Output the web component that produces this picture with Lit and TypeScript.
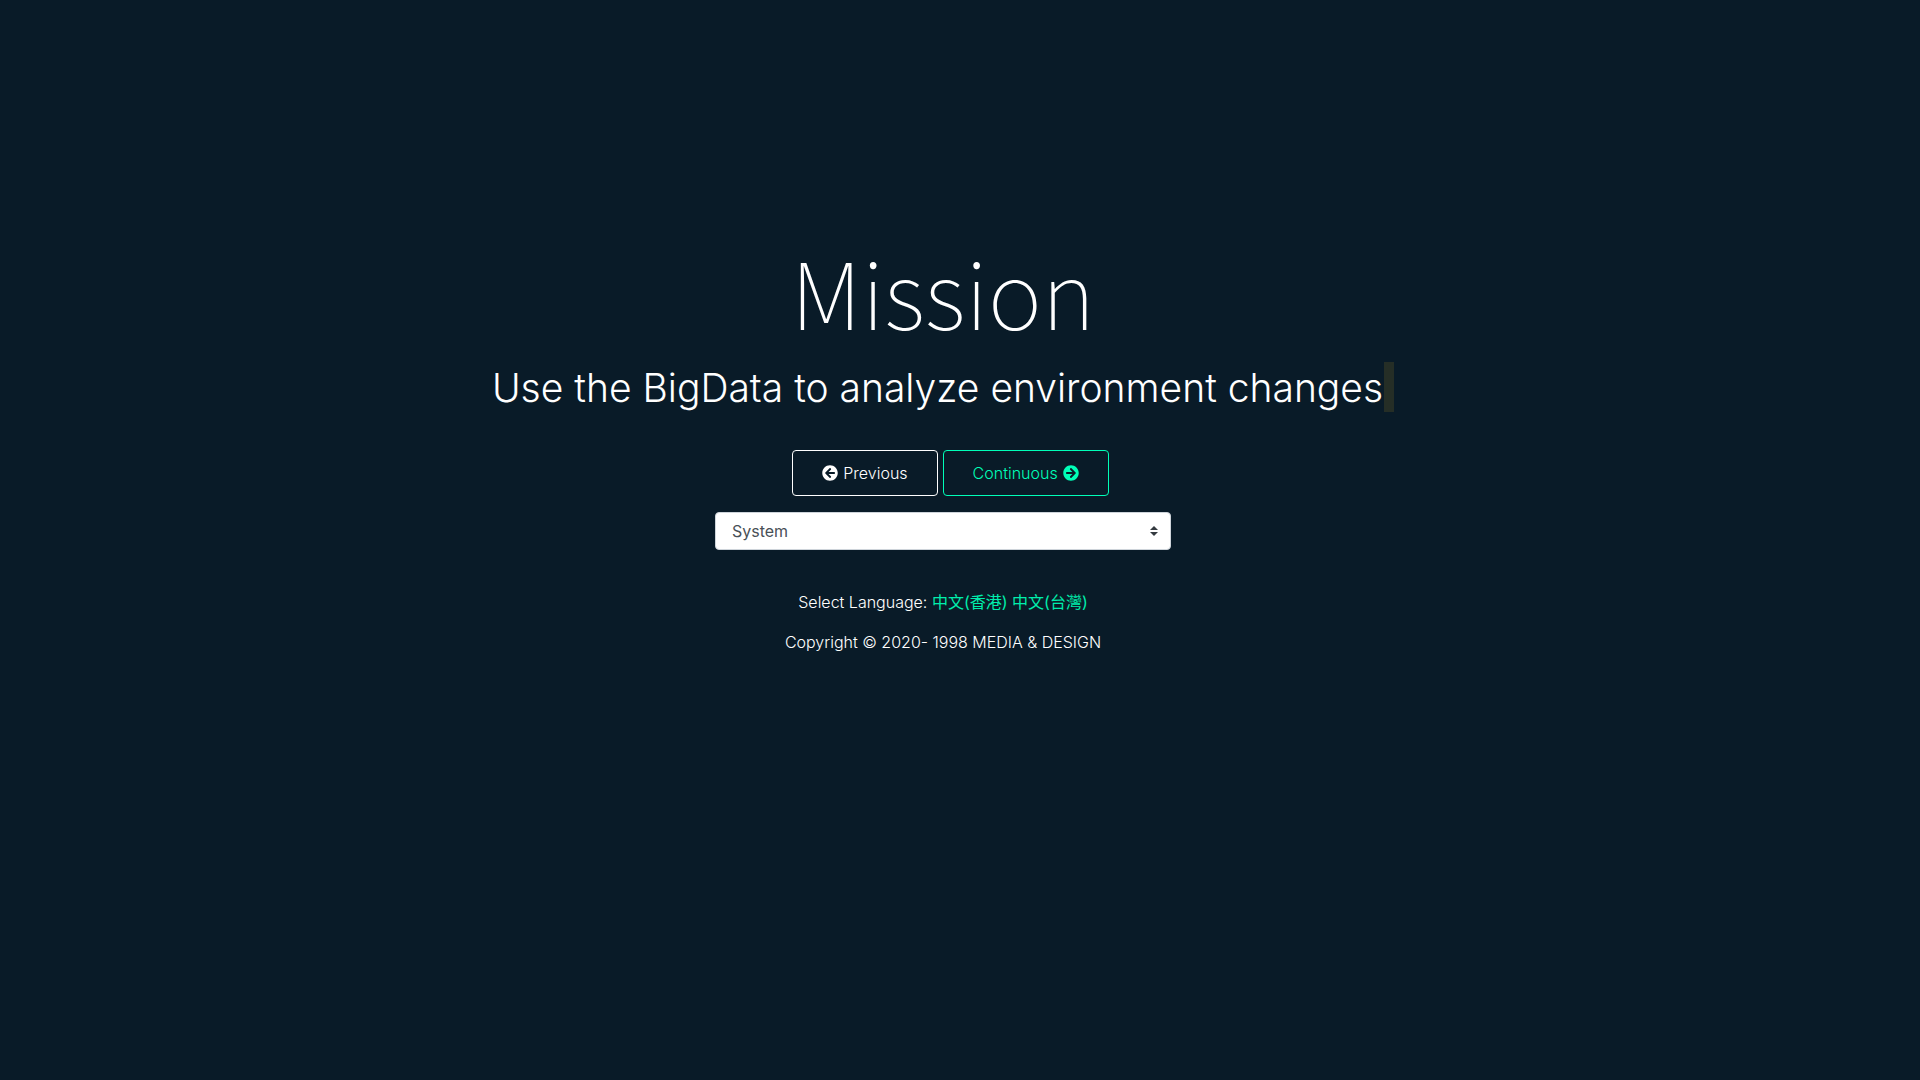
import { LitElement, html, css } from "lit";
import { customElement } from "lit/decorators.js";

@customElement("app-root")
export class AppRoot extends LitElement {
  static styles = css`
    :host {
      display: block;
      min-height: 100vh;
      box-sizing: border-box;
      padding: 236px 34px 0 0;
      background: #091b28;
      color: #fff;
      font: 300 16px/24px Inter, "Noto Sans CJK TC", sans-serif;
      text-align: center;
    }
    * { box-sizing: border-box; }
    .page { display: flex; flex-direction: column; align-items: center; }
    h1, p { margin: 0; }
    .title {
      font: 100 92px/108px "Noto Sans CJK TC", sans-serif;
    }
    .lead {
      display: flex;
      align-items: center;
      margin-top: 18px;
      font-size: 39px;
      font-weight: 300;
      line-height: 52px;
    }
    .caret { width: 10px; height: 50px; margin: 0 0 2px 1px; background: #252e26; }
    .actions { display: flex; gap: 5px; margin-top: 36px; padding-left: 15px; }
    .btn {
      display: flex;
      align-items: center;
      gap: 5px;
      height: 46px;
      padding: 0 29px;
      border: 1px solid currentColor;
      border-radius: 4px;
      background: transparent;
      color: #fff;
      font: inherit;
    }
    .go { color: #00ffb8; }
    .icon { width: 16px; height: 16px; fill: currentColor; }
    .picker { position: relative; width: 456px; max-width: 100%; margin-top: 16px; }
    .select {
      display: block;
      width: 100%;
      height: 38px;
      padding: 0 28px 0 16px;
      border: 1px solid #ced4da;
      border-radius: 4px;
      background: #fff;
      color: #495057;
      font: inherit;
      font-weight: 400;
      appearance: none;
    }
    .arrows { position: absolute; top: 14px; right: 13px; width: 8px; height: 10px; fill: #343a40; pointer-events: none; }
    .languages { margin-top: 40px; }
    .languages a { color: #00eeac; font-weight: 400; text-decoration: none; }
    .copyright { margin-top: 16px; }
  `;

  render() {
    return html`
      <main class="page">
        <h1 class="title">Mission</h1>
        <p class="lead">Use the BigData to analyze environment changes<span class="caret"></span></p>
        <div class="actions">
          <button class="btn" type="button">
            <svg class="icon" viewBox="0 0 512 512" aria-hidden="true"><path d="M256 504C119 504 8 393 8 256S119 8 256 8s248 111 248 248-111 248-248 248zm28.900-143.600L209.400 288H392c13.300 0 24-10.700 24-24v-16c0-13.300-10.700-24-24-24H209.400l75.500-72.400c9.700-9.300 9.900-24.800.4-34.300l-11-10.900c-9.400-9.400-24.600-9.400-33.900 0L107.700 239c-9.400 9.400-9.400 24.600 0 33.900l132.700 132.700c9.400 9.400 24.600 9.400 33.900 0l11-10.900c9.500-9.500 9.300-25-.4-34.300z"/></svg>
            Previous
          </button>
          <button class="btn go" type="button">
            Continuous
            <svg class="icon" viewBox="0 0 512 512" aria-hidden="true"><path d="M256 8c137 0 248 111 248 248S393 504 256 504 8 393 8 256 119 8 256 8zm-28.900 143.600l75.500 72.400H120c-13.300 0-24 10.700-24 24v16c0 13.300 10.700 24 24 24h182.600l-75.500 72.400c-9.700 9.300-9.900 24.800-.4 34.300l11 10.900c9.400 9.400 24.600 9.400 33.900 0L404.300 273c9.400-9.400 9.400-24.600 0-33.900L271.600 106.300c-9.400-9.400-24.600-9.400-33.900 0l-11 10.900c-9.500 9.600-9.300 25.100.4 34.400z"/></svg>
          </button>
        </div>
        <div class="picker">
          <select class="select" aria-label="System"><option>System</option></select>
          <svg class="arrows" viewBox="0 0 4 5" aria-hidden="true"><path d="M2 0L0 2h4zm0 5L0 3h4z"/></svg>
        </div>
        <p class="languages">Select Language: <a href="#hk">中文(香港)</a> <a href="#tw">中文(台灣)</a></p>
        <p class="copyright">Copyright © 2020- 1998 MEDIA &amp; DESIGN</p>
      </main>
    `;
  }
}
